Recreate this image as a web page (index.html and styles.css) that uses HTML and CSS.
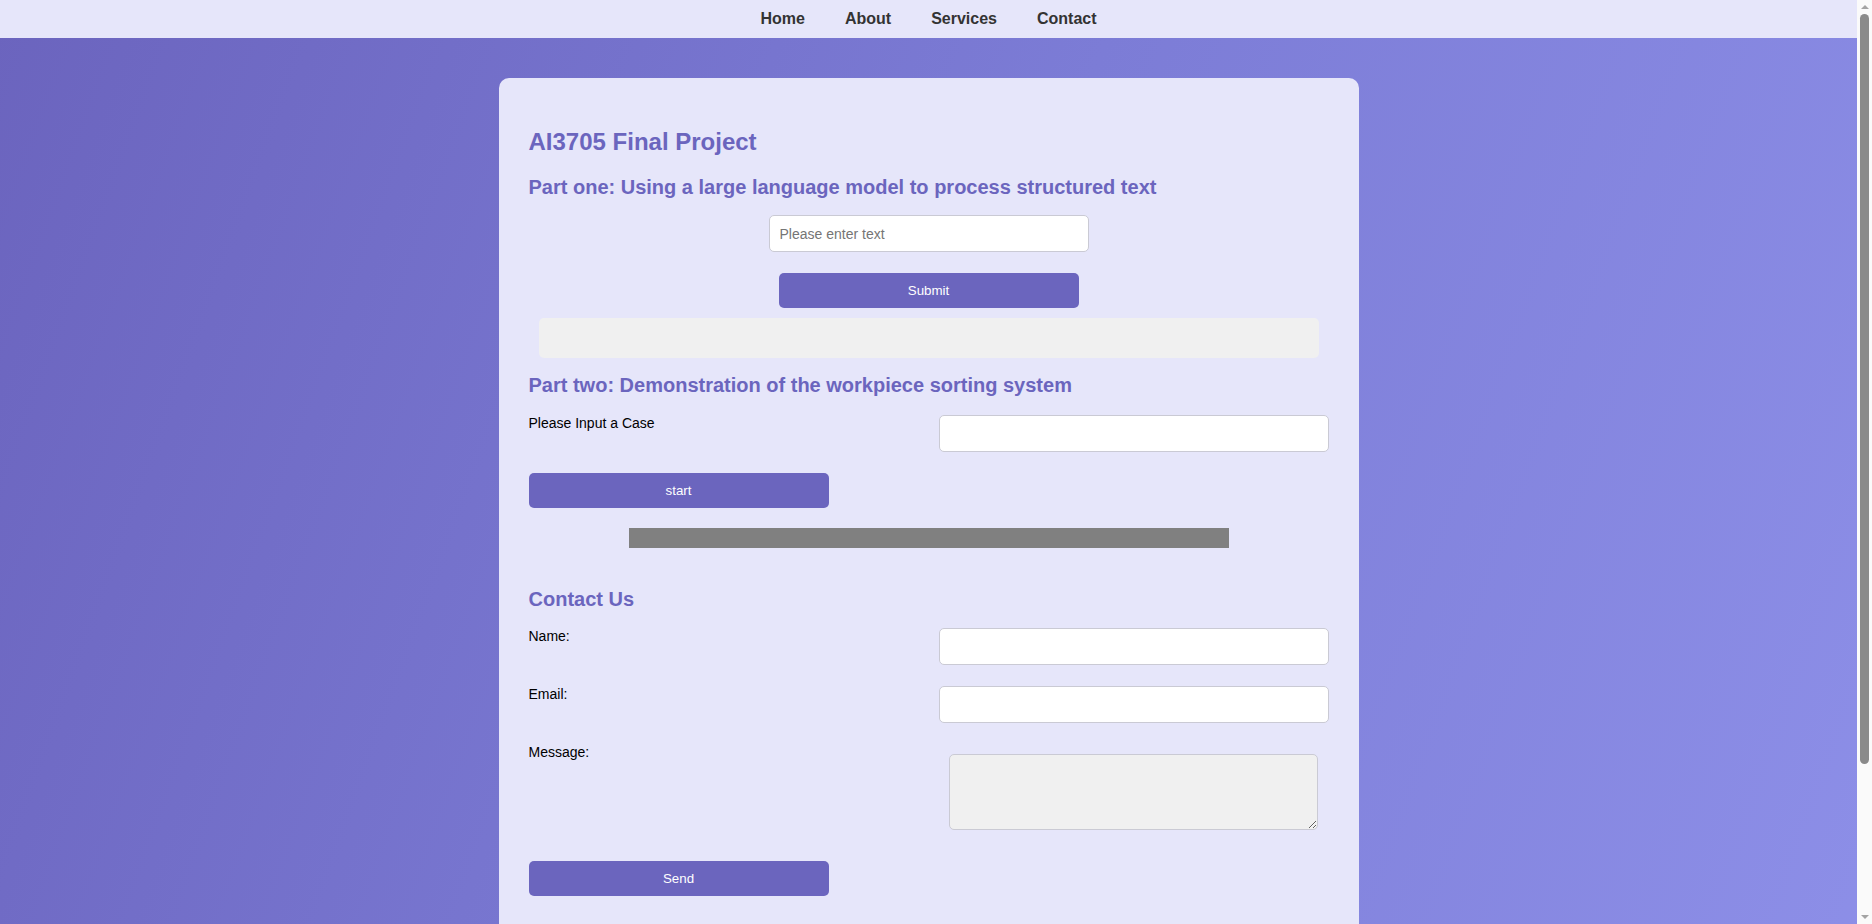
FILE: index.html
```html
<!DOCTYPE html>
<html lang="en">
<head>
<meta charset="utf-8">
<title>AI3705 Final Project</title>
<link rel="stylesheet" href="styles.css">
</head>
<body>
<nav class="topnav">
  <ul class="nav-list">
    <li><a href="#" class="nav-link">Home</a></li>
    <li><a href="#" class="nav-link">About</a></li>
    <li><a href="#" class="nav-link">Services</a></li>
    <li><a href="#" class="nav-link">Contact</a></li>
  </ul>
</nav>
<main class="card">
  <h1 class="title">AI3705 Final Project</h1>

  <h2 class="section-title part-one">Part one: Using a large language model to process structured text</h2>
  <div class="center-row">
    <input type="text" class="text-input small" placeholder="Please enter text">
  </div>
  <div class="center-row">
    <button class="btn">Submit</button>
  </div>
  <div class="output-box"></div>

  <h2 class="section-title part-two">Part two: Demonstration of the workpiece sorting system</h2>
  <div class="form-row">
    <label class="form-label">Please Input a Case</label>
    <input type="text" class="text-input">
  </div>
  <button class="btn">start</button>
  <div class="progress-bar"></div>

  <h2 class="section-title contact">Contact Us</h2>
  <form class="contact-form">
    <div class="form-row">
      <label class="form-label">Name:</label>
      <input type="text" class="text-input">
    </div>
    <div class="form-row">
      <label class="form-label">Email:</label>
      <input type="email" class="text-input">
    </div>
    <div class="form-row">
      <label class="form-label">Message:</label>
      <textarea class="message-input"></textarea>
    </div>
    <button type="button" class="btn">Send</button>
  </form>
</main>
<div class="fake-scrollbar" aria-hidden="true">
  <span class="sb-arrow up"></span>
  <span class="sb-thumb"></span>
  <span class="sb-arrow down"></span>
</div>
</body>
</html>
```
FILE: styles.css
```css
body {
  margin: 0;
  padding-right: 15px;
  font-family: "Liberation Sans", Arial, sans-serif;
  background: linear-gradient(110deg, #6b64be 0%, #7c7cd6 50%, #8d8fe8 100%);
}
.topnav {
  background: #e6e6fa;
  padding: 10px 0;
}
.nav-list {
  list-style: none;
  margin: 0;
  padding: 0;
  display: flex;
  justify-content: center;
  gap: 40px;
}
.nav-link {
  display: block;
  font-size: 16px;
  line-height: 18px;
  font-weight: bold;
  color: #333;
  text-decoration: none;
}
.card {
  display: block;
  width: 800px;
  margin: 40px auto 60px;
  padding: 30px 30px 60px;
  background: #e6e6fa;
  border-radius: 10px;
}
.title {
  font-size: 24px;
  line-height: 28px;
  color: #6b65be;
  margin: 20px 0 20px;
}
.section-title {
  font-size: 20px;
  line-height: 23px;
  color: #6b65be;
  margin: 0;
}
.part-one {
  margin-bottom: 16px;
}
.part-two {
  margin-top: 16px;
  margin-bottom: 18px;
}
.contact {
  margin-top: 40px;
  margin-bottom: 17px;
}
.center-row {
  display: flex;
  justify-content: center;
}
.center-row + .center-row {
  margin-top: 21px;
}
.text-input {
  box-sizing: border-box;
  width: 100%;
  height: 37px;
  padding: 10px;
  border: 1px solid #cacad4;
  border-radius: 5px;
  background: #fff;
  font-family: "Liberation Sans", Arial, sans-serif;
  font-size: 14px;
  outline: none;
}
.text-input.small {
  width: 320px;
}
.text-input::placeholder {
  color: #757575;
}
.btn {
  display: block;
  box-sizing: border-box;
  width: 300px;
  height: 35px;
  padding: 0;
  border: none;
  border-radius: 5px;
  background: #6b65be;
  color: #fff;
  font-family: "Liberation Sans", Arial, sans-serif;
  font-size: 13.333px;
  cursor: pointer;
}
.output-box {
  height: 40px;
  margin: 10px;
  background: #f0f0f0;
  border-radius: 5px;
}
.form-row {
  display: grid;
  grid-template-columns: 1fr 1fr;
  column-gap: 20px;
  align-items: start;
  margin-bottom: 21px;
}
.form-label {
  font-size: 14px;
  line-height: 16px;
  color: #000;
}
.progress-bar {
  width: 600px;
  height: 20px;
  margin: 20px auto 0;
  background: #808080;
}
.contact-form {
  margin: 0;
}
.message-input {
  box-sizing: border-box;
  width: calc(100% - 21px);
  height: 76px;
  margin: 10px;
  border: 1px solid #cacad4;
  border-radius: 5px;
  background: #f0f0f0;
  font-family: "Liberation Sans", Arial, sans-serif;
  display: block;
}
.fake-scrollbar {
  position: fixed;
  top: 0;
  right: 0;
  width: 15px;
  height: 100vh;
  background: #fafafa;
  display: flex;
  flex-direction: column;
  align-items: center;
}
.sb-arrow {
  width: 0;
  height: 0;
  border-left: 4px solid transparent;
  border-right: 4px solid transparent;
  flex: none;
}
.sb-arrow.up {
  margin-top: 5px;
  border-bottom: 4px solid #a3a3a3;
}
.sb-arrow.down {
  margin-top: auto;
  margin-bottom: 5px;
  border-top: 4px solid #a3a3a3;
}
.sb-thumb {
  width: 9px;
  height: 750px;
  margin-top: 5px;
  background: #8a8a8a;
  border-radius: 5px;
}
```
